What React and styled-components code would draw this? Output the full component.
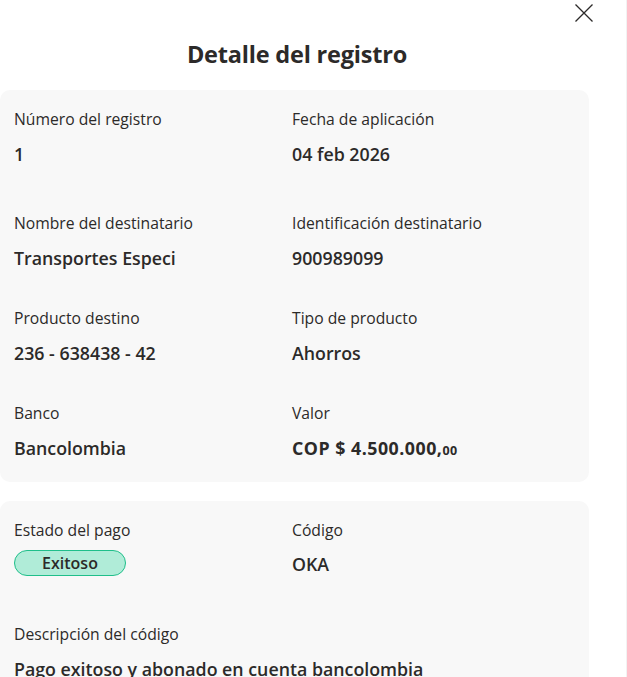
import React from "react";
import styled, { createGlobalStyle } from "styled-components";

const Global = createGlobalStyle`
  html, body { margin: 0; padding: 0; background: #ffffff; }
  body { font-family: "Open Sans", "Noto Sans", sans-serif; color: #2c2a29; }
`;

const Page = styled.div`
  width: 627px;
  height: 677px;
  overflow: hidden;
  background: #fff;
  border-right: 1px solid #f2f2f2;
  box-sizing: border-box;
`;

const Modal = styled.div`
  width: 594px;
  display: flex;
  flex-direction: column;
`;

const Header = styled.div`
  display: flex;
  justify-content: flex-end;
  height: 24px;
  padding-top: 2px;
`;

const CloseButton = styled.button`
  width: 22px;
  height: 22px;
  padding: 0;
  border: 0;
  background: transparent;
  display: flex;
  align-items: center;
  justify-content: center;
  cursor: pointer;
  margin-right: -1px;
`;

const Title = styled.h2`
  margin: 12px 0 0 0;
  text-align: center;
  font-size: 23.5px;
  font-weight: 700;
  line-height: 32px;
  letter-spacing: -0.2px;
  color: #2c2a29;
`;

const Card = styled.section`
  width: 589px;
  box-sizing: border-box;
  background: #f8f8f8;
  border-radius: 10px;
  padding: ${(p) => p.$pad};
  margin-top: ${(p) => p.$mt}px;
  display: grid;
  grid-template-columns: 278px 1fr;
  row-gap: ${(p) => p.$gap}px;
`;

const Field = styled.div`
  display: flex;
  flex-direction: column;
  margin-bottom: ${(p) => p.$extra || 0}px;
`;

const Label = styled.span`
  font-size: 15.7px;
  line-height: 20px;
  color: #2c2a29;
`;

const Value = styled.span`
  margin-top: ${(p) => (p.$mt != null ? p.$mt : 13)}px;
  font-size: 17.8px;
  line-height: 24px;
  font-weight: ${(p) => (p.$strong ? 700 : 600)};
  letter-spacing: ${(p) => (p.$strong ? "0.5px" : "normal")};
  color: #2c2a29;
  white-space: nowrap;
`;

const Cents = styled.span`
  font-size: 12.5px;
  letter-spacing: 0.3px;
`;

const Badge = styled.span`
  align-self: flex-start;
  margin-top: 10px;
  width: 112px;
  height: 26px;
  box-sizing: border-box;
  border: 1px solid #1fbf8a;
  background: #b0ecd8;
  border-radius: 13px;
  display: flex;
  align-items: center;
  justify-content: center;
  font-size: 16px;
  font-weight: 600;
  color: #2c2a29;
`;

const Wide = styled(Field)`
  grid-column: 1 / span 2;
`;

export default function App() {
  return (
    <Page>
      <Global />
      <Modal>
        <Header>
          <CloseButton aria-label="Cerrar">
            <svg width="20" height="20" viewBox="0 0 20 20">
              <path d="M1.5 1.5 L18.5 18.5 M18.5 1.5 L1.5 18.5" stroke="#2c2a29" strokeWidth="1.3" fill="none" />
            </svg>
          </CloseButton>
        </Header>
        <Title>Detalle del registro</Title>
        <Card $mt={20} $pad="19px 14px 19px 14px" $gap={38}>
          <Field $extra={9}>
            <Label>Número del registro</Label>
            <Value>1</Value>
          </Field>
          <Field $extra={9}>
            <Label>Fecha de aplicación</Label>
            <Value>04 feb 2026</Value>
          </Field>
          <Field>
            <Label>Nombre del destinatario</Label>
            <Value>Transportes Especi</Value>
          </Field>
          <Field>
            <Label>Identificación destinatario</Label>
            <Value>900989099</Value>
          </Field>
          <Field>
            <Label>Producto destino</Label>
            <Value>236 - 638438 - 42</Value>
          </Field>
          <Field>
            <Label>Tipo de producto</Label>
            <Value>Ahorros</Value>
          </Field>
          <Field>
            <Label>Banco</Label>
            <Value>Bancolombia</Value>
          </Field>
          <Field>
            <Label>Valor</Label>
            <Value $strong>
              COP $ 4.500.000,<Cents>00</Cents>
            </Value>
          </Field>
        </Card>
        <Card $mt={19} $pad="19px 14px 22px 14px" $gap={48}>
          <Field>
            <Label>Estado del pago</Label>
            <Badge>Exitoso</Badge>
          </Field>
          <Field>
            <Label>Código</Label>
            <Value $mt={12}>OKA</Value>
          </Field>
          <Wide>
            <Label>Descripción del código</Label>
            <Value $mt={13}>Pago exitoso y abonado en cuenta bancolombia</Value>
          </Wide>
        </Card>
      </Modal>
    </Page>
  );
}
